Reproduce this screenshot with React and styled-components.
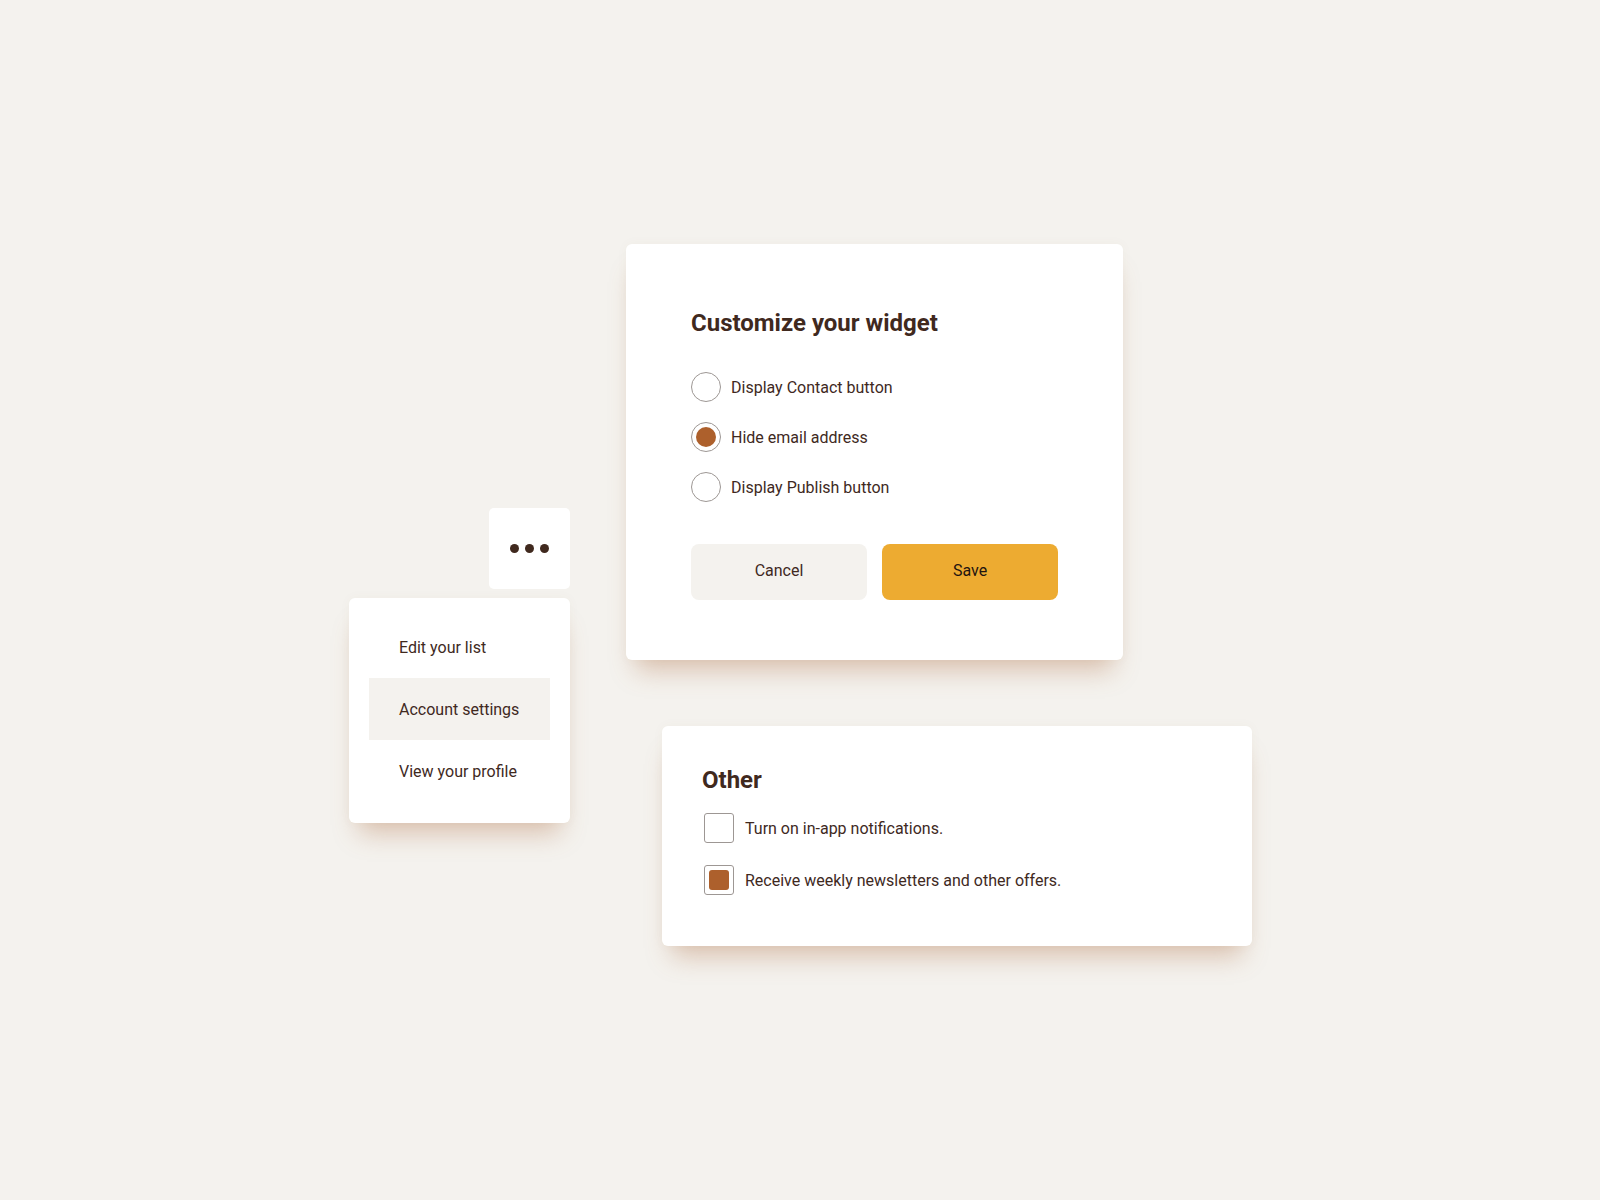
import React from "react";
import styled, { createGlobalStyle } from "styled-components";

const GlobalStyle = createGlobalStyle`
	body {
		margin: 0;
		background: #f4f2ee;
		font-family: Roboto, "Liberation Sans", sans-serif;
		color: #40291e;
	}
`;

const Stage = styled.div`
	min-height: 1200px;
	box-sizing: border-box;
	padding: 244px 0 0 349px;
	display: flex;
	flex-direction: row;
	align-items: flex-start;
`;

const LeftColumn = styled.div`
	width: 221px;
	margin-top: 264px;
	display: flex;
	flex-direction: column;
	align-items: flex-end;
	gap: 9px;
`;

const RightColumn = styled.div`
	margin-left: 56px;
	display: flex;
	flex-direction: column;
	align-items: flex-start;
`;

const Card = styled.div`
	box-sizing: border-box;
	background: #ffffff;
	border-radius: 6px;
	box-shadow: 0 20px 24px -10px rgba(173, 105, 60, 0.36),
		0 0 12px rgba(120, 90, 60, 0.04);
`;

const WidgetCard = styled(Card)`
	width: 497px;
	padding: 65px 65px 60px;
`;

const OtherCard = styled(Card)`
	width: 590px;
	margin-top: 66px;
	margin-left: 36px;
	padding: 40px 40px 51px;
`;

const Title = styled.h2`
	margin: 0;
	font-size: 24px;
	line-height: 28px;
	font-weight: 700;
	color: #40291e;
`;

const OptionList = styled.div`
	margin-top: ${p => p.$top}px;
	margin-left: ${p => p.$indent || 0}px;
	display: flex;
	flex-direction: column;
	gap: ${p => p.$gap}px;
`;

const OptionRow = styled.label`
	display: flex;
	align-items: center;
	gap: ${p => p.$space}px;
	height: 30px;
	font-size: 16px;
	color: #40291e;
`;

const RadioMark = styled.span`
	box-sizing: border-box;
	width: 30px;
	height: 30px;
	border-radius: 50%;
	border: 1px solid #9d9794;
	display: flex;
	align-items: center;
	justify-content: center;
	&::after {
		content: "";
		width: 20px;
		height: 20px;
		border-radius: 50%;
		background: ${p => (p.$checked ? "#ad602c" : "transparent")};
	}
`;

const CheckMark = styled.span`
	box-sizing: border-box;
	width: 30px;
	height: 30px;
	border-radius: 3px;
	border: 1px solid #9d9794;
	display: flex;
	align-items: center;
	justify-content: center;
	&::after {
		content: "";
		width: 20px;
		height: 20px;
		border-radius: 3px;
		background: ${p => (p.$checked ? "#ad602c" : "transparent")};
	}
`;

const ButtonRow = styled.div`
	margin-top: 42px;
	display: flex;
	gap: 15px;
`;

const Button = styled.button`
	width: 176px;
	height: 56px;
	padding: 0 0 3px;
	border: none;
	border-radius: 8px;
	font-family: Roboto, "Liberation Sans", sans-serif;
	font-size: 16px;
	background: ${p => (p.$primary ? "#edab31" : "#f4f2ee")};
	color: ${p => (p.$primary ? "#1f1410" : "#40291e")};
	cursor: pointer;
`;

const DotsButton = styled.button`
	width: 81px;
	height: 81px;
	border: none;
	border-radius: 5px;
	background: #ffffff;
	display: flex;
	align-items: center;
	justify-content: center;
	gap: 6px;
	padding: 0;
	cursor: pointer;
`;

const Dot = styled.span`
	width: 9px;
	height: 9px;
	border-radius: 50%;
	background: #40291e;
`;

const Menu = styled(Card)`
	width: 221px;
	padding: 18px 20px 21px;
	display: flex;
	flex-direction: column;
`;

const MenuItem = styled.div`
	height: 62px;
	display: flex;
	align-items: center;
	padding-left: 30px;
	font-size: 16px;
	color: #40291e;
	background: ${p => (p.$active ? "#f4f2ee" : "transparent")};
`;

const radioOptions = [
	{ label: "Display Contact button", checked: false },
	{ label: "Hide email address", checked: true },
	{ label: "Display Publish button", checked: false },
];

const checkOptions = [
	{ label: "Turn on in-app notifications.", checked: false },
	{ label: "Receive weekly newsletters and other offers.", checked: true },
];

const menuItems = ["Edit your list", "Account settings", "View your profile"];

export default function App() {
	return (
		<>
			<GlobalStyle />
			<Stage>
				<LeftColumn>
					<DotsButton aria-label="More">
						<Dot />
						<Dot />
						<Dot />
					</DotsButton>
					<Menu>
						{menuItems.map(item => (
							<MenuItem key={item} $active={item === "Account settings"}>
								{item}
							</MenuItem>
						))}
					</Menu>
				</LeftColumn>
				<RightColumn>
					<WidgetCard>
						<Title>Customize your widget</Title>
						<OptionList $top={35} $gap={20}>
							{radioOptions.map(option => (
								<OptionRow key={option.label} $space={10}>
									<RadioMark $checked={option.checked} />
									{option.label}
								</OptionRow>
							))}
						</OptionList>
						<ButtonRow>
							<Button>Cancel</Button>
							<Button $primary>Save</Button>
						</ButtonRow>
					</WidgetCard>
					<OtherCard>
						<Title>Other</Title>
						<OptionList $top={19} $gap={22} $indent={2}>
							{checkOptions.map(option => (
								<OptionRow key={option.label} $space={11}>
									<CheckMark $checked={option.checked} />
									{option.label}
								</OptionRow>
							))}
						</OptionList>
					</OtherCard>
				</RightColumn>
			</Stage>
		</>
	);
}
